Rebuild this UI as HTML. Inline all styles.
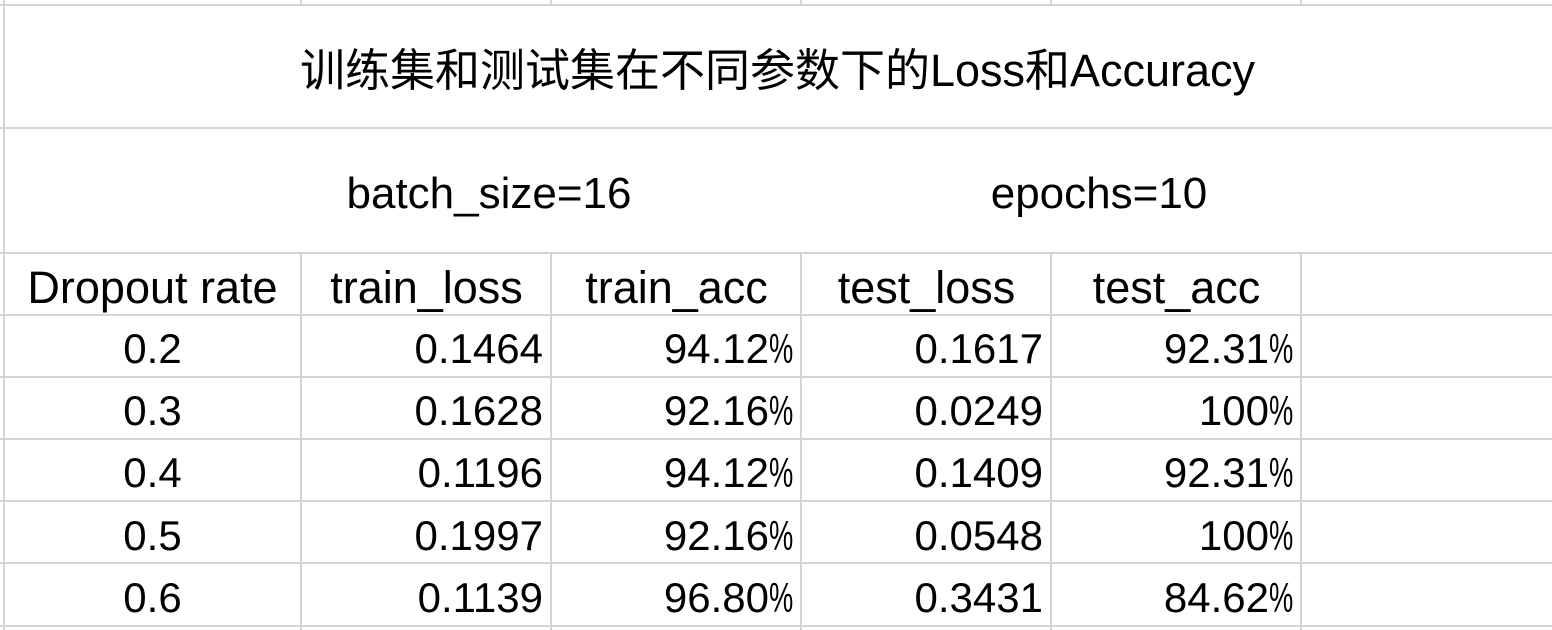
<!DOCTYPE html>
<html><head><meta charset="utf-8"><style>
body{margin:0;width:1552px;height:630px;background:#fff;overflow:hidden;position:relative;font-family:"Liberation Sans","Noto Sans CJK SC",sans-serif;color:#000}
.h{position:absolute;left:0;width:1552px;height:2px;background:#d4d4d4}
.v{position:absolute;width:2px;background:#d4d4d4}
.t{position:absolute;font-size:42px;line-height:62px;height:62px;white-space:nowrap}
.c{text-align:center}.r{text-align:right}
.hd{font-size:45px}
.p{display:inline-block;width:24px;text-align:left}
.p b{font-weight:normal;display:inline-block;transform:scaleX(0.65);transform-origin:0 0}
</style></head><body>
<div class="v" style="left:3px;top:0;height:630px"></div>
<div class="v" style="left:300px;top:0;height:5px"></div>
<div class="v" style="left:550px;top:0;height:5px"></div>
<div class="v" style="left:800px;top:0;height:5px"></div>
<div class="v" style="left:1050px;top:0;height:5px"></div>
<div class="v" style="left:1300px;top:0;height:5px"></div>
<div class="v" style="left:300px;top:253px;height:377px"></div>
<div class="v" style="left:550px;top:253px;height:377px"></div>
<div class="v" style="left:800px;top:253px;height:377px"></div>
<div class="v" style="left:1050px;top:253px;height:377px"></div>
<div class="v" style="left:1300px;top:253px;height:377px"></div>
<div class="h" style="top:4px"></div>
<div class="h" style="top:127px"></div>
<div class="h" style="top:252px"></div>
<div class="h" style="top:314px"></div>
<div class="h" style="top:376px"></div>
<div class="h" style="top:438px"></div>
<div class="h" style="top:500px"></div>
<div class="h" style="top:562px"></div>
<div class="h" style="top:625px"></div>

<div class="t c" style="left:3px;width:1549px;top:38px;font-size:45px;line-height:66px">训练集和测试集在不同参数下的Loss和Accuracy</div>
<div class="t c" style="left:289px;width:400px;top:163px;font-size:44px">batch_size=16</div>
<div class="t c" style="left:899px;width:400px;top:163px;font-size:44px">epochs=10</div>

<div class="t c hd" style="left:4px;width:297px;top:257px">Dropout rate</div>
<div class="t c hd" style="left:302px;width:249px;top:257px">train_loss</div>
<div class="t c hd" style="left:552px;width:249px;top:257px">train_acc</div>
<div class="t c hd" style="left:802px;width:249px;top:257px">test_loss</div>
<div class="t c hd" style="left:1052px;width:249px;top:257px">test_acc</div>

<div class="t c" style="left:4px;width:297px;top:318px">0.2</div>
<div class="t r" style="left:302px;width:241px;top:318px">0.1464</div>
<div class="t r" style="left:552px;width:241px;top:318px">94.12<span class="p"><b>%</b></span></div>
<div class="t r" style="left:802px;width:241px;top:318px">0.1617</div>
<div class="t r" style="left:1052px;width:241px;top:318px">92.31<span class="p"><b>%</b></span></div>

<div class="t c" style="left:4px;width:297px;top:380px">0.3</div>
<div class="t r" style="left:302px;width:241px;top:380px">0.1628</div>
<div class="t r" style="left:552px;width:241px;top:380px">92.16<span class="p"><b>%</b></span></div>
<div class="t r" style="left:802px;width:241px;top:380px">0.0249</div>
<div class="t r" style="left:1052px;width:241px;top:380px">100<span class="p"><b>%</b></span></div>

<div class="t c" style="left:4px;width:297px;top:442px">0.4</div>
<div class="t r" style="left:302px;width:241px;top:442px">0.1196</div>
<div class="t r" style="left:552px;width:241px;top:442px">94.12<span class="p"><b>%</b></span></div>
<div class="t r" style="left:802px;width:241px;top:442px">0.1409</div>
<div class="t r" style="left:1052px;width:241px;top:442px">92.31<span class="p"><b>%</b></span></div>

<div class="t c" style="left:4px;width:297px;top:505px">0.5</div>
<div class="t r" style="left:302px;width:241px;top:505px">0.1997</div>
<div class="t r" style="left:552px;width:241px;top:505px">92.16<span class="p"><b>%</b></span></div>
<div class="t r" style="left:802px;width:241px;top:505px">0.0548</div>
<div class="t r" style="left:1052px;width:241px;top:505px">100<span class="p"><b>%</b></span></div>

<div class="t c" style="left:4px;width:297px;top:567px">0.6</div>
<div class="t r" style="left:302px;width:241px;top:567px">0.1139</div>
<div class="t r" style="left:552px;width:241px;top:567px">96.80<span class="p"><b>%</b></span></div>
<div class="t r" style="left:802px;width:241px;top:567px">0.3431</div>
<div class="t r" style="left:1052px;width:241px;top:567px">84.62<span class="p"><b>%</b></span></div>
</body></html>
